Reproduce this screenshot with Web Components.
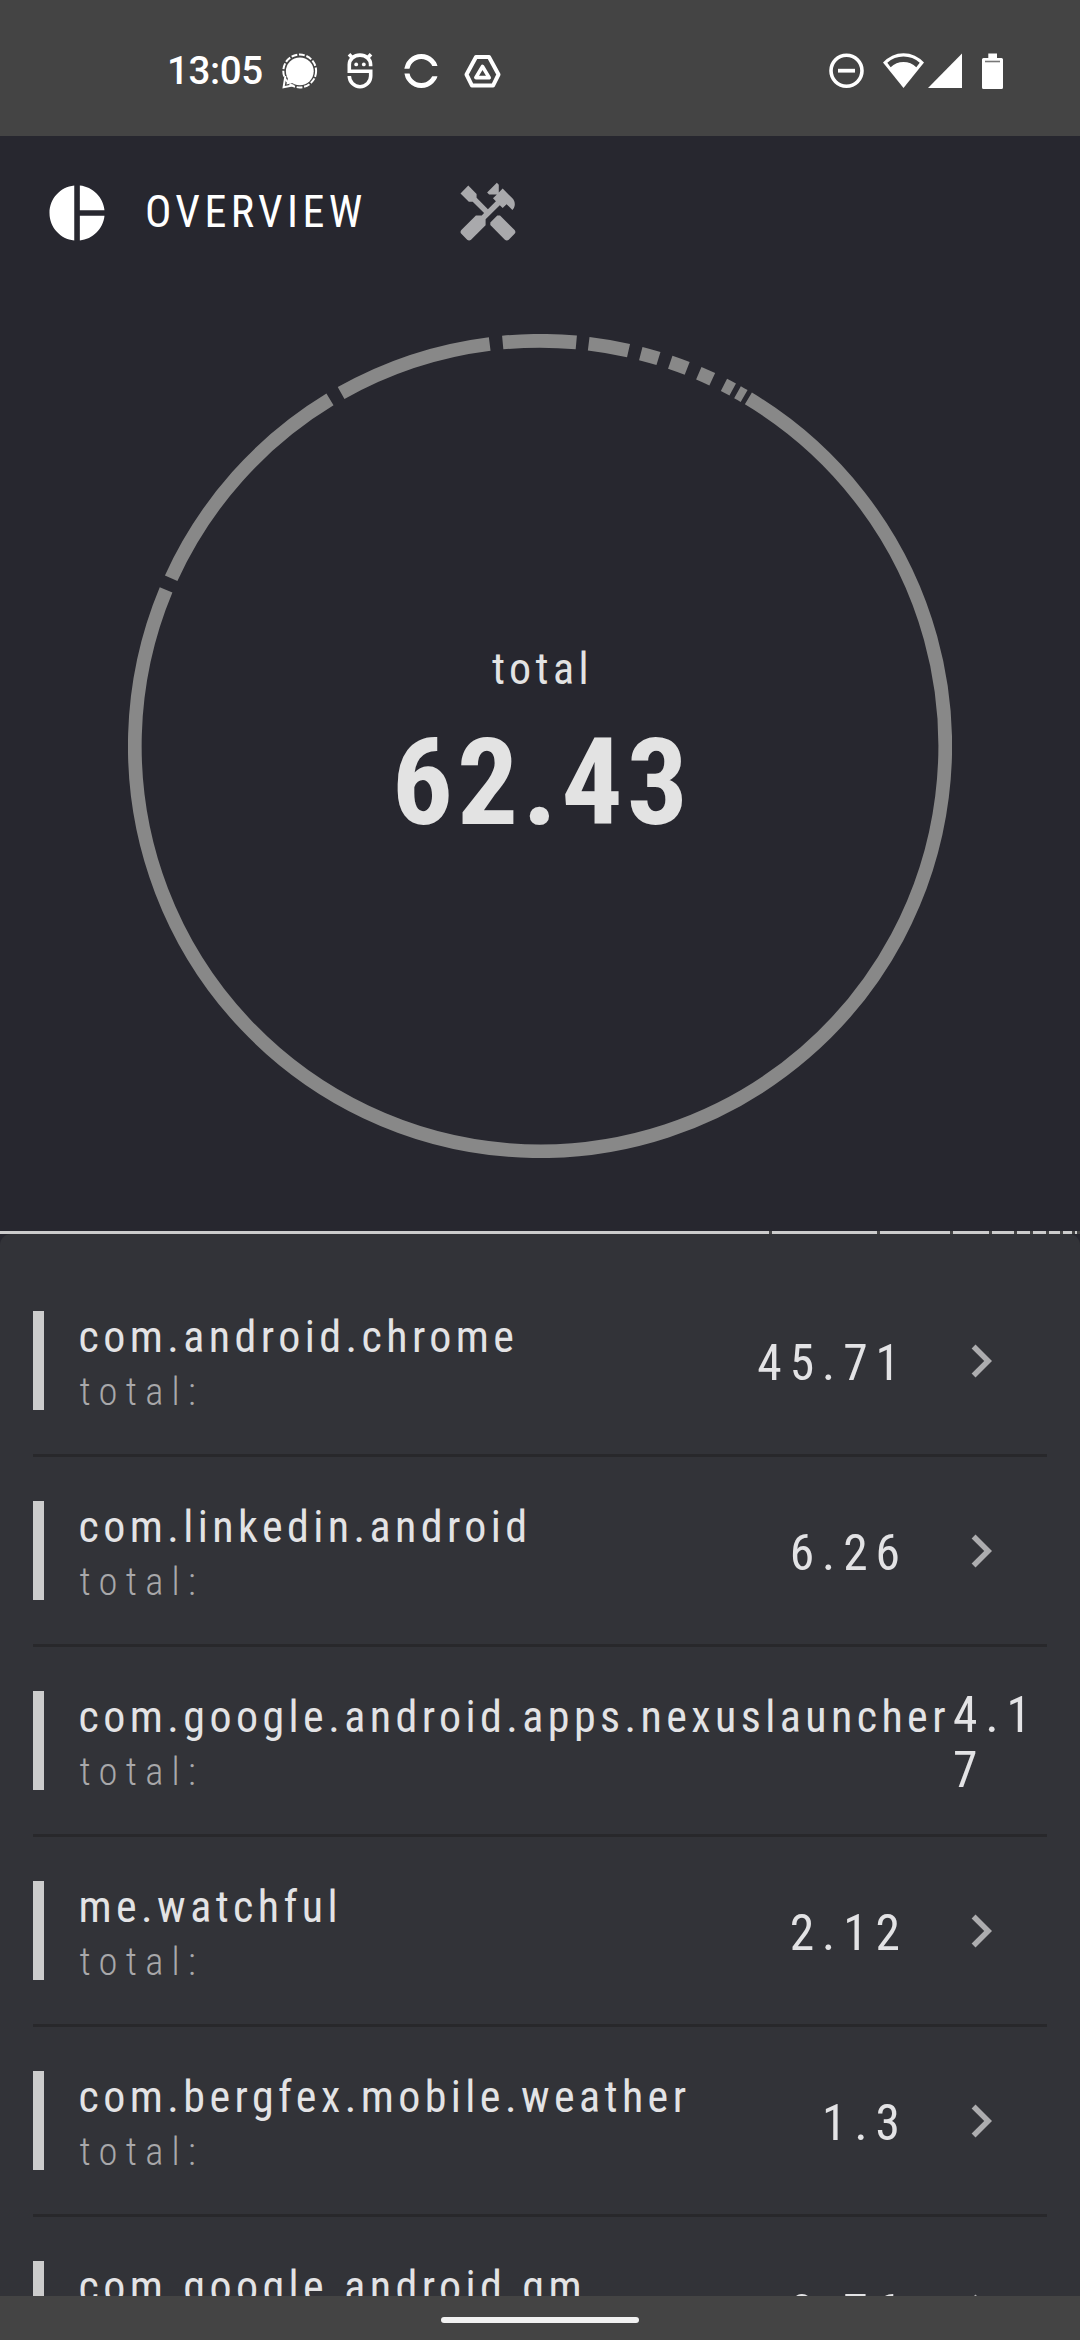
<!DOCTYPE html>
<html lang="en">
<head>
<meta charset="utf-8">
<title>Overview</title>
<style>
html,body{margin:0;padding:0;background:#27272f}
body{width:1080px;height:2340px;overflow:hidden}
</style>
</head>
<body>
<usage-screen></usage-screen>
<script>
const FONT = '"Roboto Condensed", Roboto, sans-serif';

class StatusBar extends HTMLElement {
  constructor() {
    super();
    this.attachShadow({mode: 'open'}).innerHTML = `
<style>
:host{display:flex;box-sizing:border-box;height:136px;flex:none;background:#444;color:#fff;padding:6px 75px 0 167px;align-items:center;font:500 38.5px/46px Roboto,sans-serif}
.time{width:114px;letter-spacing:-.4px;white-space:nowrap}
svg{display:block;flex:none}
.apps{display:flex;gap:17px;align-items:center;flex:1}
.sys{display:flex;align-items:center}
.signal{overflow:visible}
</style>
<div class="time">13:05</div>
<div class="apps">
 <svg width="44" height="44" viewBox="0 0 44 44"><circle cx="18.8" cy="22.3" r="13.9" fill="#fff"/><circle cx="18.7" cy="22" r="16.4" fill="none" stroke="#fff" stroke-width="2" stroke-dasharray="5.9 1.7"/><path d="M4.4 27L2.6 38.2 12.6 36.2" fill="none" stroke="#fff" stroke-width="2"/><path d="M7.5 27L5.4 35.4 14 33.5z" fill="#fff"/></svg>
 <svg width="44" height="44" viewBox="0 0 44 44"><g fill="none" stroke="#fff" stroke-width="3.6"><path d="M28.6 17.2V15.5a10.5 9.2 0 0 0-21.3 0v6.7h21.4v4.8a10.7 10.7 0 0 1-21.4 0"/><path d="M7 5.2l4 4.2M29 5.2l-4 4.2"/></g><g fill="#fff"><circle cx="14.2" cy="15.4" r="1.9"/><circle cx="21.8" cy="15.4" r="1.9"/></g></svg>
 <svg width="44" height="44" viewBox="0 0 44 44"><circle cx="18.3" cy="22" r="14.5" fill="none" stroke="#fff" stroke-width="5"/><path d="M0 19.7H18V17H37V27.3H18V24.5H0z" fill="#444"/></svg>
 <svg width="44" height="44" viewBox="0 0 44 44"><g fill="none" stroke="#fff" stroke-width="4" stroke-linejoin="round"><path d="M12 8H25L34.5 25.5 29 36.6H8L2.5 25.5z"/><path d="M18.5 17.5L25.2 28.6H11.8z" stroke-width="3.6"/></g></svg>
</div>
<div class="sys">
 <svg width="50" height="44" viewBox="0 0 50 44"><circle cx="17.5" cy="21.7" r="15.5" fill="none" stroke="#fff" stroke-width="3.6"/><path d="M9 21.7h17" stroke="#fff" stroke-width="3.8"/></svg>
 <svg width="50" height="44" viewBox="0 0 50 44"><path d="M4 13.6A27 27 0 0 1 45 13.6L24.5 39z" fill="#fff"/><path d="M8.3 13.7A24.3 24.3 0 0 1 40.7 13.7L37.3 18.3A18 18 0 0 0 11.7 18.3z" fill="#444"/></svg>
 <svg class="signal" width="44" height="44" viewBox="0 0 44 44"><path d="M-1 39H33V4.5z" fill="#fff"/></svg>
 <svg width="32" height="44" viewBox="0 0 32 44"><path d="M15.3 4.5h8.7v4.5h4.5q1.500 0 1.500 1.500v28q0 1.500-1.500 1.500h-18q-1.500 0-1.500-1.500v-28q0-1.500 1.500-1.500h4.800z" fill="#fff"/><path d="M12 12.5h15" stroke="#777" stroke-width="1.6"/></svg>
</div>`;
  }
}
customElements.define('status-bar', StatusBar);

class TabStrip extends HTMLElement {
  constructor() {
    super();
    this.attachShadow({mode: 'open'}).innerHTML = `
<style>
:host{display:flex;align-items:center;height:154px;padding-left:44px;font:400 44px/52px ${FONT};font-stretch:75%;color:#fff}
svg{display:block;width:66px;height:66px;fill:#fff;flex:none}
.name{width:309.5px;padding-left:35px;letter-spacing:4.4px;white-space:nowrap;margin-bottom:2px}
.dim{fill:#a9a9ac}
</style>
<svg viewBox="0 0 24 24"><path d="M11 2v20c-5.070-.5-9-4.790-9-10s3.930-9.500 9-10zm2.030 0v8.990H22c-.47-4.740-4.240-8.520-8.970-8.990zm0 11.010V22c4.740-.47 8.500-4.250 8.970-8.990h-8.970z"/></svg>
<span class="name">OVERVIEW</span>
<svg class="dim" viewBox="0 0 24 24"><path d="M21.670 18.170l-5.300-5.300h-.99l-2.540 2.540v.99l5.300 5.300c.39.39 1.020.39 1.410 0l2.120-2.120c.39-.38.39-1.020 0-1.410z"/><path d="M17.340 10.190l1.410-1.410 2.120 2.120c1.170-1.170 1.170-3.070 0-4.240l-3.540-3.540-1.410 1.410V1.710L15.220 1l-3.540 3.540.71.710h2.830l-1.410 1.410 1.060 1.060-2.890 2.890-4.130-4.130V5.060L4.830 2.040 2 4.870 5.030 7.900h1.410l4.130 4.130-.85.850H7.600l-5.300 5.300c-.39.39-.39 1.020 0 1.410l2.120 2.120c.39.39 1.020.39 1.410 0l5.300-5.300v-2.120l5.150-5.150 1.060 1.050z"/></svg>`;
  }
}
customElements.define('tab-strip', TabStrip);

class UsageRing extends HTMLElement {
  constructor() {
    super();
    const R = 405.2, C = 412;
    const segments = [[30.95,292.66],[294.46,328.78],[330.6,352.87],[354.72,365.14],[6.9,12.62],[14.4,17],[18.75,21.3],[23.07,25.16],[27,28.4],[29.17,30.25]];
    const pt = a => (C + R * Math.sin(a * Math.PI / 180)).toFixed(2) + ' ' + (C - R * Math.cos(a * Math.PI / 180)).toFixed(2);
    const d = segments.map(([a, b]) => `M${pt(a)}A${R} ${R} 0 ${b - a > 180 ? 1 : 0} 1 ${pt(b)}`).join('');
    this.attachShadow({mode: 'open'}).innerHTML = `
<style>
:host{display:grid;place-items:center;height:824px;margin:44px 128px 73px;font-family:${FONT};font-stretch:75%;color:#e3e3e3}
svg,.label{grid-area:1/1;display:block}
.label{text-align:center;white-space:nowrap;padding-top:5px}
.cap{font-size:44px;line-height:52px;letter-spacing:4.4px;padding-left:5px}
.sum{font-size:121px;line-height:142px;font-weight:700;letter-spacing:4.1px;margin-top:17px;padding-left:4px}
</style>
<svg width="824" height="824" viewBox="0 0 824 824"><path d="${d}" fill="none" stroke="#888" stroke-width="13.7"/></svg>
<div class="label"><div class="cap"><slot name="caption"></slot></div><div class="sum"><slot></slot></div></div>`;
  }
}
customElements.define('usage-ring', UsageRing);

class ShareBar extends HTMLElement {
  constructor() {
    super();
    const widths = [769,105,70,36,22,13,13,11,9,2];
    this.attachShadow({mode: 'open'}).innerHTML = `
<style>:host{display:flex;gap:3px;height:3px;flex:none;background:#444}i{display:block;background:#ccc;flex:none}</style>
${widths.map(w => `<i style="width:${w}px"></i>`).join('')}`;
  }
}
customElements.define('share-bar', ShareBar);

class UsageRow extends HTMLElement {
  constructor() {
    super();
    this.attachShadow({mode: 'open'}).innerHTML = `
<style>
:host{display:flex;box-sizing:border-box;height:190px;flex:none;padding:44px 0;border-bottom:3px solid #28282b;font-family:${FONT};font-stretch:75%;color:#e3e3e5}
.bar{width:11px;height:99px;background:#ccc;flex:none}
.text{display:flex;flex-direction:column;flex:none;padding-left:34.5px;white-space:nowrap}
.name{font-size:44px;line-height:52px;letter-spacing:4.42px}
.sub{font-size:38.5px;line-height:46px;font-weight:300;letter-spacing:8.25px;color:#a8a8aa;padding-top:6px;padding-left:1px}
.value{flex:1;font-size:49.5px;line-height:55px;letter-spacing:8px;align-self:center;text-align:right;padding:5px 40px 0 0;white-space:nowrap}
svg{width:66px;height:66px;display:block;fill:#adadaf;margin-right:33px;align-self:center;flex:none}
:host([long]) svg{display:none}
:host([long]) .value{flex:none;width:94px;margin-left:auto;padding:5px 0 0;text-align:left;white-space:normal;word-break:break-all}
</style>
<div class="bar"></div>
<div class="text"><span class="name"><slot></slot></span><span class="sub">total:</span></div>
<div class="value"><slot name="value"></slot></div>
<svg viewBox="0 0 24 24"><path d="M8.59 16.59L13.17 12 8.59 7.41 10 6l6 6-6 6z"/></svg>`;
  }
}
customElements.define('usage-row', UsageRow);

class UsageScreen extends HTMLElement {
  constructor() {
    super();
    this.attachShadow({mode: 'open'}).innerHTML = `
<style>
:host{display:flex;flex-direction:column;width:1080px;height:2340px;overflow:hidden;background:#27272f}
.list{flex:1;min-height:0;overflow:hidden;background:#323338;padding:33px 33px 0;display:flex;flex-direction:column;border-radius:11px 11px 0 0}
.nav{height:44px;flex:none;background:#444;display:flex;justify-content:center;align-items:center}
.pill{width:198px;height:6px;border-radius:3px;background:#f1f1f1;margin-top:4px}
</style>
<status-bar></status-bar>
<tab-strip></tab-strip>
<usage-ring><span slot="caption">total</span>62.43</usage-ring>
<share-bar></share-bar>
<div class="list">
<usage-row>com.android.chrome<span slot="value">45.71</span></usage-row>
<usage-row>com.linkedin.android<span slot="value">6.26</span></usage-row>
<usage-row long>com.google.android.apps.nexuslauncher<span slot="value">4.17</span></usage-row>
<usage-row>me.watchful<span slot="value">2.12</span></usage-row>
<usage-row>com.bergfex.mobile.weather<span slot="value">1.3</span></usage-row>
<usage-row>com.google.android.gm<span slot="value">0.76</span></usage-row>
</div>
<div class="nav"><div class="pill"></div></div>`;
  }
}
customElements.define('usage-screen', UsageScreen);
</script>
</body>
</html>
